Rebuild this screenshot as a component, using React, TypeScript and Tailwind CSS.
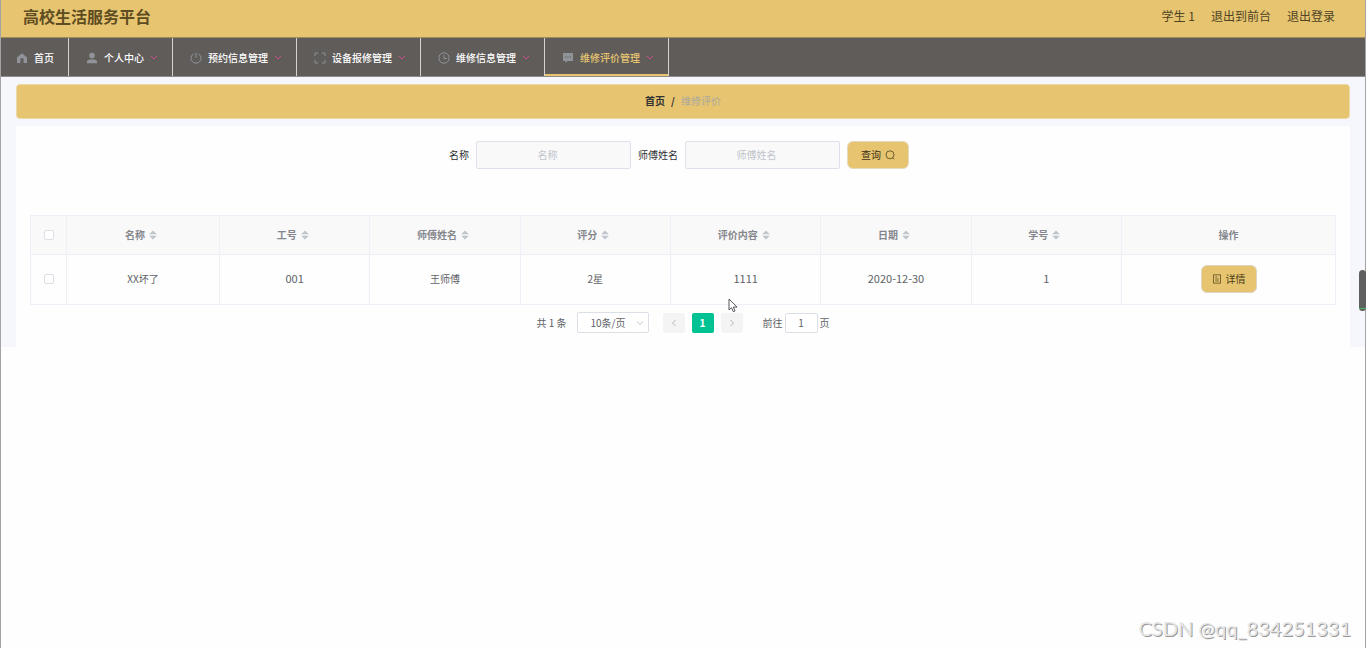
import React from "react";

const menus = [
  { label: "个人中心", icon: "user" },
  { label: "预约信息管理", icon: "power" },
  { label: "设备报修管理", icon: "frame" },
  { label: "维修信息管理", icon: "clock" },
  { label: "维修评价管理", icon: "chat", active: true },
];

const columns = ["名称", "工号", "师傅姓名", "评分", "评价内容", "日期", "学号"];

const rows = [["XX坏了", "001", "王师傅", "2星", "1111", "2020-12-30", "1"]];

const MenuIcon = ({ name }: { name: string }) => (
  <svg
    viewBox="0 0 12 12"
    className="w-3 h-3 shrink-0"
    fill="none"
    stroke="#909399"
    strokeWidth="1"
  >
    {name === "home" && (
      <path
        d="M6 1.2 1 5.4V11h3.4V7.6a1.6 1.6 0 0 1 3.2 0V11H11V5.4z"
        fill="#909399"
        stroke="none"
      />
    )}
    {name === "user" && (
      <g fill="#909399" stroke="none">
        <circle cx="6" cy="3.6" r="2.8" />
        <path d="M1 11.2V9.8C1 8.2 2.2 7.4 4 7.4h4c1.800 0 3 .8 3 2.400v1.400z" />
      </g>
    )}
    {name === "power" && <path d="M6 .8v5M3.600 1.800a5 5 0 1 0 4.800 0" />}
    {name === "frame" && (
      <path d="M1 4V1h3M8 1h3v3M11 8v3H8M4 11H1V8" />
    )}
    {name === "clock" && (
      <>
        <circle cx="6" cy="6" r="5.200" />
        <path d="M6 2.800V6.500h3" />
      </>
    )}
    {name === "chat" && (
      <>
        <path d="M1 1h10v8H5.500L3.500 11V9H1z" fill="#909399" stroke="none" />
        <path d="M3 5h1.200M5.400 5h1.200M7.800 5H9" stroke="#5f5c5a" />
      </>
    )}
  </svg>
);

const Chevron = ({ d, className }: { d: string; className: string }) => (
  <svg viewBox="0 0 8 8" className={className} fill="none" stroke="currentColor">
    <path d={d} />
  </svg>
);

const SortCaret = () => (
  <svg viewBox="0 0 8 10" className="w-2 h-[10px]" fill="#c0c4cc">
    <path d="M4 .5 7.800 4.300H.2zM4 9.500.2 5.700h7.600z" />
  </svg>
);

const CheckBox = ({ label }: { label: string }) => (
  <input
    type="checkbox"
    aria-label={label}
    className="block mx-auto appearance-none w-[10px] h-[10px] bg-white border border-[#dcdfe6] rounded-xs"
  />
);

const SearchField = ({ id, label }: { id: string; label: string }) => (
  <div className="flex items-center gap-[7px]">
    <label htmlFor={id} className="text-[#303133]">
      {label}
    </label>
    <input
      id={id}
      placeholder={label}
      className="w-[155px] h-7 pl-1 pr-4 pb-[2px] text-center bg-[#f9f9f9] border border-[#dfe1ea] rounded-xs placeholder:text-[#c0c4cc] outline-none"
    />
  </div>
);

const Header = () => (
  <header className="flex items-center justify-between h-[38px] pl-[22px] pr-[30px] pb-[6px] bg-[#e7c570] border-b border-[#a08c58]">
    <h1 className="text-base font-bold text-[#5e4c22]">高校生活服务平台</h1>
    <div className="flex items-center gap-4 text-xs text-[#4f4326]">
      <span>学生 1</span>
      <a href="#front">退出到前台</a>
      <a href="#logout">退出登录</a>
    </div>
  </header>
);

const Nav = () => (
  <nav className="h-[39px] bg-[#5f5c5a] border-b border-[#8f8d8c]">
    <ul className="flex h-full font-medium">
      <li className="h-full border-r border-[#d2d2d2]">
        <a href="#home" className="flex items-center h-full gap-[6px] pl-[15px] pr-[14px] pt-[2px] text-white">
          <MenuIcon name="home" />
          首页
        </a>
      </li>
      {menus.map((menu) => (
        <li key={menu.label} className="h-full border-r border-[#d2d2d2]">
          <button
            className={
              menu.active
                ? "flex items-center h-full gap-[6px] pl-[17px] pr-[14px] pt-1 border-b-2 border-[#e7c570] text-[#e7c570]"
                : "flex items-center h-full gap-[6px] pl-[17px] pr-[14px] pt-1 border-b-2 border-transparent text-white"
            }
          >
            <MenuIcon name={menu.icon} />
            {menu.label}
            <Chevron d="M1 2 4 5 7 2" className="w-2 h-2 text-[#cf4d90]" />
          </button>
        </li>
      ))}
    </ul>
  </nav>
);

const ReviewTable = () => (
  <table className="w-full table-fixed border-collapse text-center">
    <colgroup>
      <col className="w-9" />
      <col className="w-[153px]" />
      {columns.slice(1).map((name) => (
        <col key={name} />
      ))}
      <col className="w-[214px]" />
    </colgroup>
    <thead>
      <tr className="h-[39px] bg-[#f9f9f9] text-[#85878d]">
        <th className="border border-[#f0eef6]">
          <CheckBox label="全选" />
        </th>
        {columns.map((name) => (
          <th key={name} className="pr-1 pb-px border border-[#f0eef6] font-bold">
            <button className="flex items-center gap-1 mx-auto">
              {name}
              <SortCaret />
            </button>
          </th>
        ))}
        <th className="border border-[#f0eef6] font-bold">操作</th>
      </tr>
    </thead>
    <tbody>
      {rows.map((row) => (
        <tr key={row[1]} className="h-[50px] text-[#606266]">
          <td className="pb-px border border-[#f0eef6]">
            <CheckBox label={row[0]} />
          </td>
          {row.map((cell, i) => (
            <td
              key={i}
              className={
                /^[\d-]+$/.test(cell)
                  ? "pb-[3px] border border-[#f0eef6] text-[11px]"
                  : "pb-px border border-[#f0eef6]"
              }
            >
              {cell}
            </td>
          ))}
          <td className="pb-px border border-[#f0eef6]">
            <button className="flex items-center gap-1 h-7 mx-auto px-[10px] bg-[#e7c570] border border-[#dcd5c3] rounded-md text-[#4a3c18]">
              <svg viewBox="0 0 10 10" className="w-[10px] h-[10px]" fill="none" stroke="currentColor" strokeWidth=".7">
                <path d="M1.500.8h7v8.400h-7zM3.200 3h2M3.200 5h3.600M3.200 7h3.600" />
              </svg>
              详情
            </button>
          </td>
        </tr>
      ))}
    </tbody>
  </table>
);

const Pagination = () => (
  <div className="flex items-center justify-center mt-[7px] text-[#606266]">
    <span className="mr-[10px]">共 1 条</span>
    <span className="relative mr-[14px]">
      <select
        aria-label="每页条数"
        className="block w-[72px] h-[21px] pl-[13px] appearance-none bg-white border border-[#dcdfe6] rounded-xs"
      >
        <option>10条/页</option>
      </select>
      <Chevron
        d="M1 2.500 4 5.500 7 2.500"
        className="absolute right-[5px] top-[7px] w-2 h-2 text-[#c0c4cc] pointer-events-none"
      />
    </span>
    <div className="flex gap-[7px] mr-5">
      <button aria-label="上一页" className="flex items-center justify-center w-[22px] h-5 bg-[#f4f4f5] rounded-xs">
        <Chevron d="M5.500 1 2.500 4 5.500 7" className="w-2 h-2 text-[#b4b7bf]" />
      </button>
      <button className="w-[22px] h-5 bg-[#00c292] rounded-xs font-bold text-white">1</button>
      <button aria-label="下一页" className="flex items-center justify-center w-[22px] h-5 bg-[#f4f4f5] rounded-xs">
        <Chevron d="M2.500 1 5.500 4 2.500 7" className="w-2 h-2 text-[#b4b7bf]" />
      </button>
    </div>
    <label htmlFor="jump">前往</label>
    <input
      id="jump"
      defaultValue="1"
      className="w-[33px] h-5 mx-[2px] text-center bg-white border border-[#dcdfe6] rounded-xs outline-none"
    />
    <span>页</span>
  </div>
);

const App = () => {
  return (
    <div className="relative min-h-screen bg-[#fefefe] border-x border-[#a3a3a5] font-['Noto_Sans_CJK_SC',sans-serif] text-[10px] leading-4">
      <Header />
      <Nav />
      <main className="px-[15px] pt-[7px] bg-[#f6f7fc]">
        <div className="flex items-center justify-center gap-[6px] h-[35px] pb-px mb-[7px] bg-[#e7c570] border border-[#ecd9a8] rounded-sm">
          <a href="#home" className="font-bold text-[#303133]">
            首页
          </a>
          <span className="font-bold text-[#303133]">/</span>
          <span className="text-[#a9a89f]">维修评价</span>
        </div>
        <section className="px-[14px] pt-[15px] pb-[14px] bg-[#fefefe]">
          <form className="flex justify-center gap-[7px] pr-2 mb-[46px]">
            <SearchField id="name" label="名称" />
            <SearchField id="master" label="师傅姓名" />
            <button
              type="button"
              className="flex items-center gap-1 h-7 px-[13px] bg-[#e7c570] border border-[#e4dac0] rounded-md text-[#3b3016]"
            >
              查询
              <svg viewBox="0 0 10 10" className="w-[10px] h-[10px]" fill="none" stroke="currentColor" strokeWidth=".7">
                <circle cx="5" cy="4.800" r="4" />
                <path d="m7.600 7.800 1.400 1.500" />
              </svg>
            </button>
          </form>
          <ReviewTable />
          <Pagination />
        </section>
      </main>

      <svg viewBox="0 0 10 15" className="absolute left-[727px] top-[298px] w-[10px] h-[15px]">
        <path
          d="M1 1v11l2.500-2.300 1.800 4 1.800-.8-1.800-3.800H9z"
          fill="#fff"
          stroke="#44444c"
          strokeWidth=".9"
        />
      </svg>
      <div className="absolute -right-px top-[270px] flex flex-col justify-end w-[7px] h-[41px] pb-[2px] bg-[#5f5f5f] rounded-full">
        <div className="h-px bg-[#4fb365]" />
      </div>
      <p className="absolute right-[14px] bottom-[6px] font-['Lato',sans-serif] text-xl leading-7 text-[#e6e6e6] [text-shadow:1px_1px_0_#999]">
        CSDN @qq_834251331
      </p>
    </div>
  );
};

export default App;
